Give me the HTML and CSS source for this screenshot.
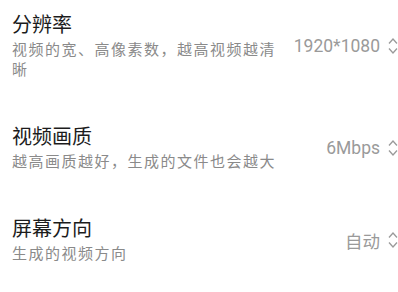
FILE: index.html
```html
<!DOCTYPE html>
<html lang="zh-CN">
<head>
    <meta charset="UTF-8">
    <meta name="viewport" content="width=device-width, initial-scale=1.0">
    <title>录制设置</title>
    <link rel="stylesheet" href="styles.css">
</head>
<body>
    <div class="settings">
        <div class="setting-row">
            <div class="setting-text">
                <div class="setting-title">分辨率</div>
                <div class="setting-desc">视频的宽、高像素数，越高视频越清晰</div>
            </div>
            <div class="setting-value">
                <span>1920*1080</span>
                <svg class="chevrons" viewBox="0 0 10 18" width="10" height="18">
                    <path d="M1 6.5 L5 2 L9 6.5 M1 11.5 L5 16 L9 11.5" />
                </svg>
            </div>
        </div>

        <div class="setting-row">
            <div class="setting-text">
                <div class="setting-title">视频画质</div>
                <div class="setting-desc">越高画质越好，生成的文件也会越大</div>
            </div>
            <div class="setting-value">
                <span>6Mbps</span>
                <svg class="chevrons" viewBox="0 0 10 18" width="10" height="18">
                    <path d="M1 6.5 L5 2 L9 6.5 M1 11.5 L5 16 L9 11.5" />
                </svg>
            </div>
        </div>

        <div class="setting-row">
            <div class="setting-text">
                <div class="setting-title">屏幕方向</div>
                <div class="setting-desc">生成的视频方向</div>
            </div>
            <div class="setting-value">
                <span>自动</span>
                <svg class="chevrons" viewBox="0 0 10 18" width="10" height="18">
                    <path d="M1 6.5 L5 2 L9 6.5 M1 11.5 L5 16 L9 11.5" />
                </svg>
            </div>
        </div>
    </div>
</body>
</html>
```

FILE: styles.css
```css
body {
    margin: 0;
    background-color: #ffffff;
    font-family: Roboto, "Noto Sans CJK SC", sans-serif;
}
.settings {
    display: flex;
    flex-direction: column;
    gap: 44px;
    padding: 12px 0 0 12px;
}
.setting-row {
    display: flex;
    align-items: center;
}
.setting-text {
    flex: 1;
    max-width: 276px;
}
.setting-title {
    font-size: 20px;
    line-height: 26px;
    margin-bottom: 2px;
    color: #1c1c1c;
}
.setting-desc {
    font-size: 15px;
    line-height: 20px;
    letter-spacing: 1.5px;
    color: #8a8a8a;
}
.setting-value {
    margin-left: auto;
    display: flex;
    align-items: center;
    gap: 8px;
    font-size: 17.5px;
    color: #9a9a9a;
}
.chevrons {
    fill: none;
    stroke: #9a9a9a;
    stroke-width: 1.3;
}
```
